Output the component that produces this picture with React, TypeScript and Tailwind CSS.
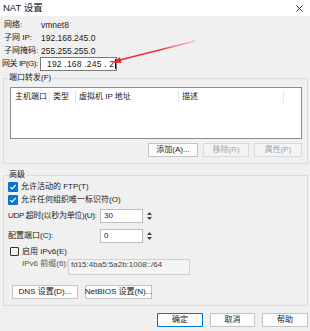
import type { ReactNode } from "react";

const font = { fontFamily: '"Liberation Sans", "Noto Sans CJK SC", sans-serif' };

function Group({ title, className, children }: { title: string; className?: string; children: ReactNode }) {
  return (
    <fieldset className={"ml-[3px] mr-[2px] border border-[#dcdcdc] px-[4px] " + (className ?? "")}>
      <legend className="px-[1px] leading-[12px]">{title}</legend>
      {children}
    </fieldset>
  );
}

function Btn({ children, disabled, primary, className }: { children: ReactNode; disabled?: boolean; primary?: boolean; className?: string }) {
  return (
    <div
      className={
        "flex h-[14px] shrink-0 items-center justify-center border " +
        (primary
          ? "border-[#0078d7] bg-[#fdfdfd] text-[#1a1a1a] "
          : disabled
            ? "border-[#dadada] bg-[#f4f4f4] text-[#a6a6a6] "
            : "border-[#c4c4c4] bg-[#fcfcfc] text-[#1a1a1a] ") +
        (className ?? "")
      }
    >
      {children}
    </div>
  );
}

function Check({ checked, label, className }: { checked?: boolean; label: string; className?: string }) {
  return (
    <div className={"flex h-[13px] items-center gap-[3px] " + (className ?? "")}>
      {checked ? (
        <span className="flex h-[10px] w-[10px] items-center justify-center rounded-[1px] bg-[#0a74d4]">
          <svg width="8" height="8" viewBox="0 0 8 8">
            <path d="M1.3 4.2 L3.2 6 L6.8 1.9" fill="none" stroke="white" strokeWidth="1.2" />
          </svg>
        </span>
      ) : (
        <span className="ml-[2px] h-[9px] w-[9px] rounded-[1px] border border-[#333]" />
      )}
      <span>{label}</span>
    </div>
  );
}

function Spin({ value }: { value: string }) {
  return (
    <div className="flex h-[14px] items-center gap-[2px]">
      <div className="flex h-full w-[43px] items-center border border-[#bdbdbd] bg-white pl-[3px]">{value}</div>
      <div className="flex h-full w-[8px] flex-col items-center justify-center gap-[2px]">
        <svg width="5" height="3" viewBox="0 0 5 3"><path d="M0 3 L2.5 0 L5 3 Z" fill="#444" /></svg>
        <svg width="5" height="3" viewBox="0 0 5 3"><path d="M0 0 L2.5 3 L5 0 Z" fill="#444" /></svg>
      </div>
    </div>
  );
}

const info = [
  ["网络:", "vmnet8"],
  ["子网 IP:", "192.168.245.0"],
  ["子网掩码:", "255.255.255.0"],
];

export default function App() {
  return (
    <div className="relative h-[331px] w-[310px] overflow-hidden whitespace-nowrap bg-[#f0f0f0] text-[8px] leading-[12px] text-[#1a1a1a]" style={font}>
      <div className="flex h-[16px] items-center justify-between bg-white pl-[3px] pr-[7px]">
        <span className="text-[9.5px]">NAT 设置</span>
        <svg width="7" height="7" viewBox="0 0 7 7">
          <path d="M0.5 0.5 L6.5 6.5 M6.5 0.5 L0.5 6.5" stroke="#333" strokeWidth="1" />
        </svg>
      </div>

      <div className="flex flex-col pl-[4px] pt-[2px] text-[8.5px]">
        {info.map(([k, v]) => (
          <div key={k} className="flex h-[13px] items-center">
            <span className="w-[37px] shrink-0 text-[8px]">{k}</span>
            <span>{v}</span>
          </div>
        ))}
        <div className="-ml-[2px] flex h-[14px] items-center">
          <span className="w-[38px] shrink-0 text-[8px] tracking-[-0.4px]">网关 IP(G):</span>
          <div className="flex h-full w-[77px] items-center border border-[#7a7a7a] bg-white pl-[6px] tracking-[0.2px]">
            192 .168 .245 . 2<span className="ml-[1px] h-[10px] w-px bg-black" />
          </div>
        </div>
      </div>

      <Group title="端口转发(F)" className="mt-[1px] pb-[6px]">
        <div className="mt-[3px] ml-[2px] mr-[1px] h-[52px] border border-[#8c8c8c] bg-white">
          <div className="flex h-[17px] items-center">
            <span className="w-[39px] border-r border-[#e5e5e5] pl-[4px]">主机端口</span>
            <span className="w-[26px] border-r border-[#e5e5e5] pl-[3px]">类型</span>
            <span className="w-[103px] border-r border-[#e5e5e5] pl-[3px]">虚拟机 IP 地址</span>
            <span className="w-[105px] border-r border-[#e5e5e5] pl-[3px]">描述</span>
          </div>
        </div>
        <div className="mt-[4px] flex justify-end gap-[5px] pr-[1px]">
          <Btn className="w-[50px]">添加(A)...</Btn>
          <Btn disabled className="w-[46px]">移除(R)</Btn>
          <Btn disabled className="w-[48px]">属性(P)</Btn>
        </div>
      </Group>

      <Group title="高级" className="mt-[5px] pb-[6px]">
        <Check checked label="允许活动的 FTP(T)" className="-mt-[1px]" />
        <Check checked label="允许任何组织唯一标识符(O)" />
        <div className="mt-[3px] flex items-center">
          <span className="w-[92px] shrink-0 tracking-[-0.3px]">UDP 超时(以秒为单位)(U):</span>
          <Spin value="30" />
        </div>
        <div className="mt-[6px] flex items-center">
          <span className="w-[92px] shrink-0">配置端口(C):</span>
          <Spin value="0" />
        </div>
        <Check label="启用 IPv6(E)" className="mt-[2px]" />
        <div className="mt-[1px] flex h-[16px] items-start pl-[14px]">
          <span className="w-[46px] shrink-0 leading-[10px] text-[#555]">IPv6 前缀(6):</span>
          <div className="h-full w-[122px] border border-[#d0d0d0] bg-[#f4f4f4] pl-[2px] leading-[10px] text-[#444]">
            fd15:4ba5:5a2b:1008::/64
          </div>
        </div>
        <div className="mt-[10px] flex gap-[7px] pl-[4px]">
          <Btn className="h-[13px] w-[66px]">DNS 设置(D)...</Btn>
          <Btn className="h-[13px] w-[67px]">NetBIOS 设置(N)...</Btn>
        </div>
      </Group>

      <div className="mt-[7px] flex justify-end gap-[7px] pr-[2px]">
        <Btn primary className="w-[46px]">确定</Btn>
        <Btn className="w-[45px]">取消</Btn>
        <Btn className="w-[46px]">帮助</Btn>
      </div>

      <svg className="pointer-events-none absolute left-0 top-0" width="310" height="331">
        <defs>
          <linearGradient id="fade" x1="112" y1="62" x2="195" y2="41" gradientUnits="userSpaceOnUse">
            <stop offset="0" stopColor="#e8262b" />
            <stop offset="0.6" stopColor="#ee3a3f" />
            <stop offset="1" stopColor="#f4a0a2" stopOpacity="0.5" />
          </linearGradient>
        </defs>
        <line x1="118" y1="60.5" x2="195" y2="41" stroke="url(#fade)" strokeWidth="1.6" />
        <path d="M112 62.5 L120 57 L121.5 63 Z" fill="#e8262b" />
      </svg>
    </div>
  );
}
